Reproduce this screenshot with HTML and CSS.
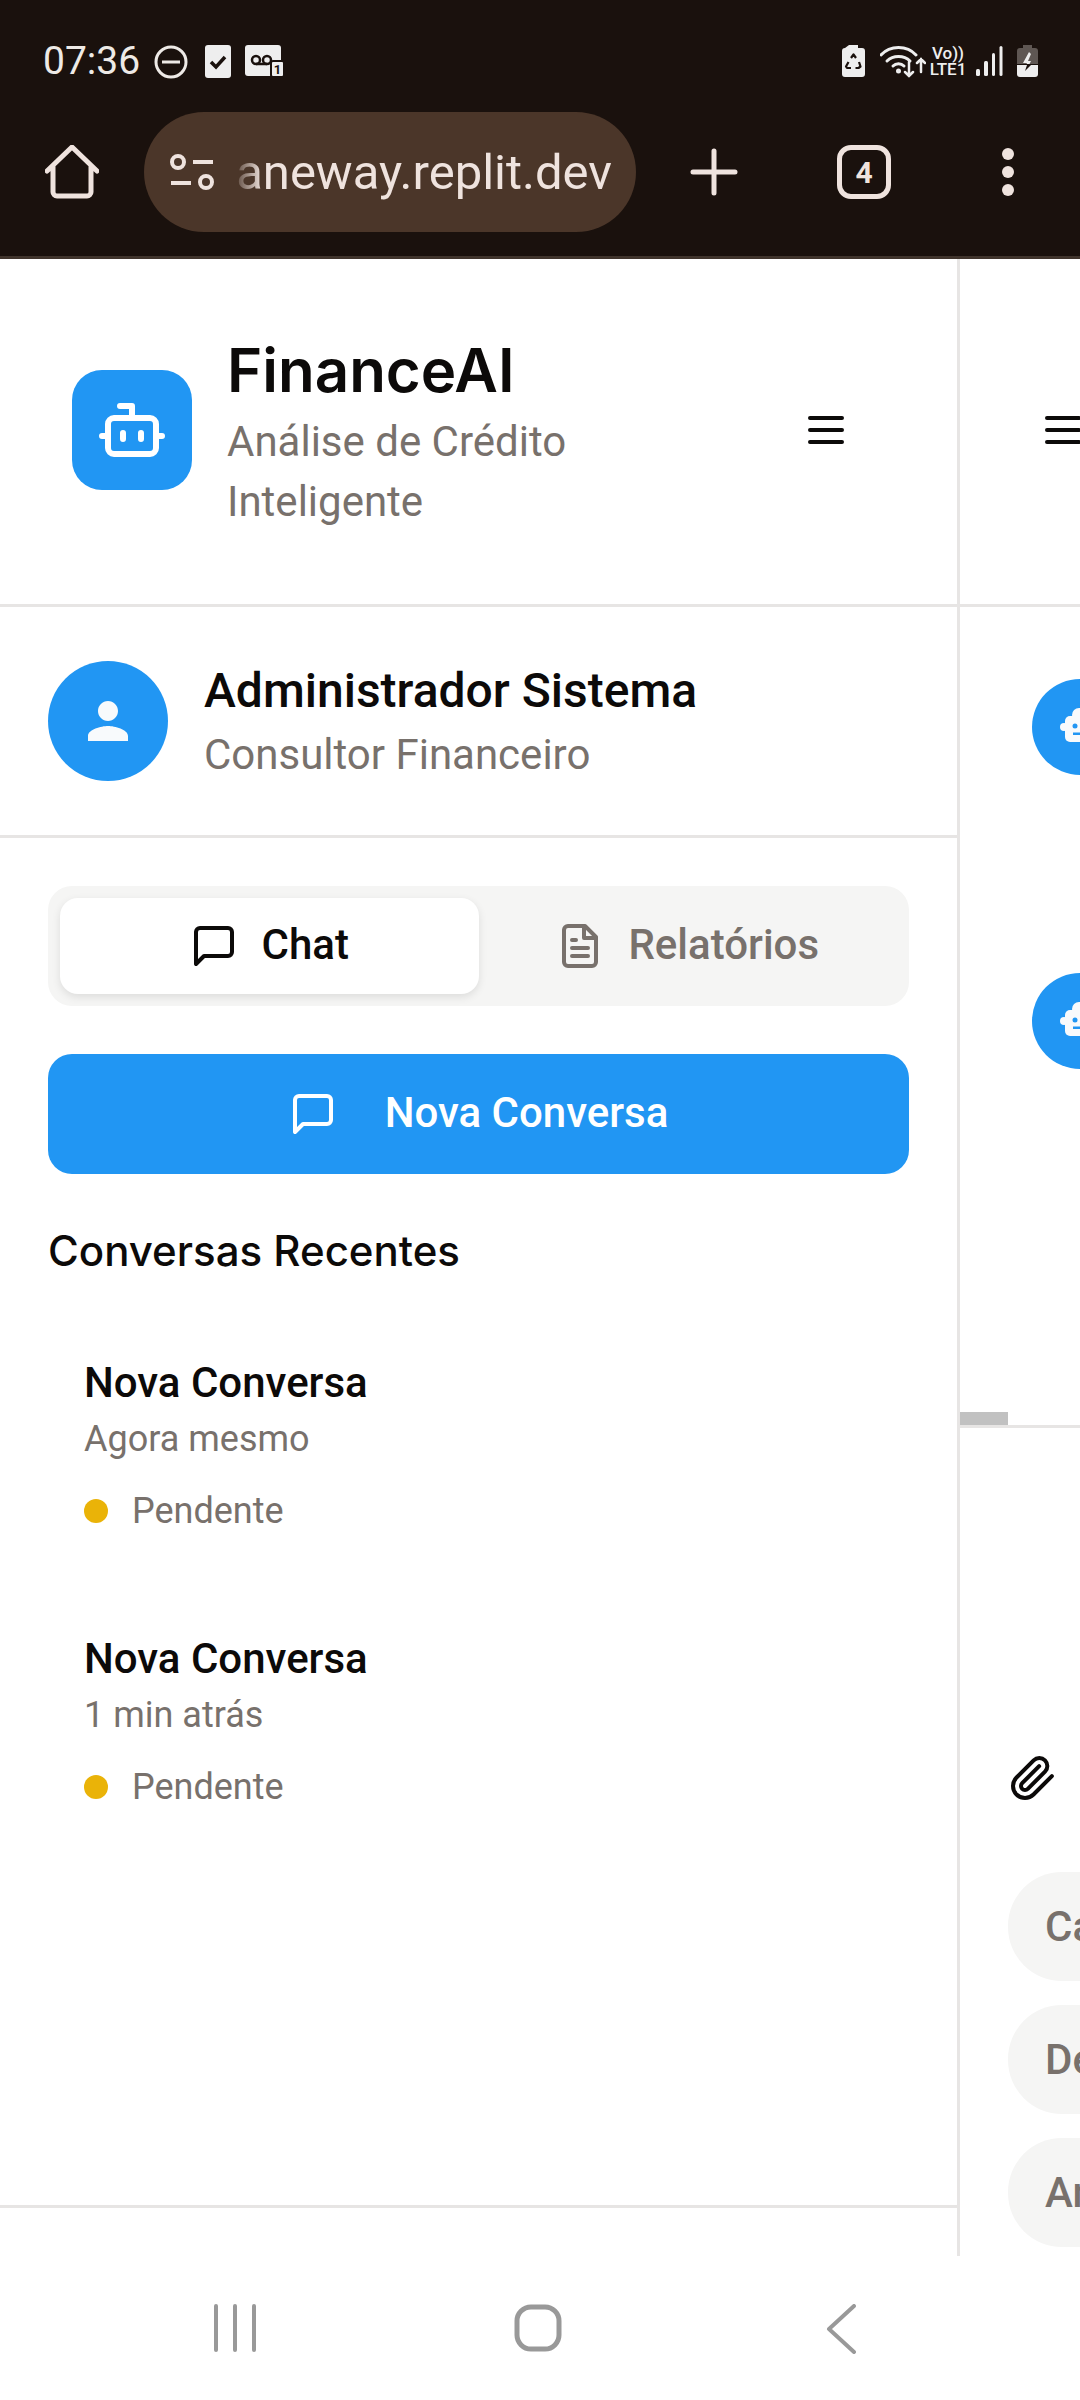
FILE: index.html
```html
<!DOCTYPE html>
<html lang="pt">
<head>
    <meta charset="UTF-8">
    <title>FinanceAI</title>
    <link rel="stylesheet" href="styles.css">
</head>
<body>
    <!-- barra do navegador -->
    <div class="topbar">
        <div class="status">
            <span class="time">07:36</span>
            <svg class="st-dnd" width="34" height="34" viewBox="0 0 34 34" fill="none" stroke="#eeeae6" stroke-width="3"><circle cx="17" cy="17" r="15"/><path d="M8 17h18"/></svg>
            <svg class="st-check" width="26" height="33" viewBox="0 0 26 33"><rect width="26" height="33" rx="3" fill="#eeeeee"/><path d="M6 17l5 5 9-10" fill="none" stroke="#1a110d" stroke-width="3.5"/></svg>
            <svg class="st-mail" width="39" height="32" viewBox="0 0 39 32"><rect width="36" height="31" rx="3" fill="#eeeeee"/><g fill="none" stroke="#1a110d" stroke-width="2.500"><circle cx="11" cy="15" r="4"/><circle cx="22" cy="15" r="4"/><path d="M11 19h11"/></g><rect x="26" y="16" width="13" height="16" rx="2" fill="#eeeeee" stroke="#1a110d" stroke-width="2"/><text x="32.500" y="29" class="st-one">1</text></svg>
            <span class="status-gap"></span>
            <svg width="23" height="32" viewBox="0 0 23 32"><path d="M7 0h9v3h4a3 3 0 0 1 3 3v23a3 3 0 0 1-3 3H3a3 3 0 0 1-3-3V6a3 3 0 0 1 3-3z" fill="#eeeeee"/><path d="M9 13l2.500-3.500L14 13M17 17l1.500 4.500-2 1.500h-3M9 23H5l-1-1.500L6.500 17" fill="none" stroke="#1a110d" stroke-width="2.200" stroke-linejoin="round"/></svg>
            <svg class="st-wifi" width="46" height="33" viewBox="0 0 46 33" fill="none" stroke="#eeeeee" stroke-width="3" stroke-linecap="round"><path d="M1 10C10 0 27 0 36 10"/><path d="M7 16c6-6 17-6 23 0"/><path d="M13 21c3-3 8-3 11 0"/><circle cx="18.500" cy="26" r="1" fill="#eeeeee"/><path d="M29 17v14M25 27l4 4 4-4M41 27V14M37 18l4-4 4 4" stroke-width="2.500"/></svg>
            <div class="st-net"><span>Vo))</span><span>LTE1</span></div>
            <svg class="st-signal" width="27" height="32" viewBox="0 0 27 32" fill="#eeeeee"><rect y="24" width="4" height="7" rx="1.500"/><rect x="8" y="16" width="4" height="15" rx="1.500"/><rect x="16" y="8" width="3" height="23" rx="1.500"/><rect x="23.500" y="1" width="3" height="30" rx="1.500"/></svg>
            <svg class="st-batt" width="21" height="32" viewBox="0 0 21 32"><path d="M6 0h9v3h3a3 3 0 0 1 3 3v13H0V6a3 3 0 0 1 3-3h3z" fill="#5f5753"/><path d="M0 20h21v9a3 3 0 0 1-3 3H3a3 3 0 0 1-3-3z" fill="#eeeeee"/><path d="M12 7L6 18h4l-.5 1h3l1.500-3h-3l3-7z" fill="#eeeeee"/><path d="M10 20l-2 6 6-6z" fill="#1a110d"/></svg>
        </div>
        <div class="toolbar">
            <svg class="tb-home" width="54" height="54" viewBox="0 0 54 54" fill="none" stroke="#efe3de" stroke-width="5" stroke-linejoin="round" stroke-linecap="round"><path d="M2 26L27 2l25 24M8 21v26a4 4 0 0 0 4 4h30a4 4 0 0 0 4-4V21"/></svg>
            <div class="url-pill">
                <svg width="44" height="36" viewBox="0 0 44 36" fill="none" stroke="#efe3de" stroke-width="4"><circle cx="8" cy="8" r="6"/><path d="M23 8h20M1 29h20"/><circle cx="36" cy="28" r="6"/></svg>
                <div class="url-text">aneway.replit.dev</div>
            </div>
            <svg class="tb-plus" width="48" height="48" viewBox="0 0 48 48" stroke="#efe3de" stroke-width="5" stroke-linecap="round"><path d="M24 3v42M3 24h42"/></svg>
            <div class="tb-tabs">4</div>
            <div class="tb-dots"><i></i><i></i><i></i></div>
        </div>
    </div>

    <div class="main">
        <!-- painel esquerdo -->
        <div class="sidebar">
            <div class="brand">
                <div class="logo">
                    <svg width="72" height="72" viewBox="0 0 24 24" fill="none" stroke="#fff" stroke-width="2" stroke-linecap="round" stroke-linejoin="round"><path d="M12 8V4H8"/><rect width="16" height="12" x="4" y="8" rx="2"/><path d="M2 14h2M20 14h2M15 13v2M9 13v2"/></svg>
                </div>
                <div class="brand-text">
                    <div class="brand-name">FinanceAI</div>
                    <div class="brand-sub">Análise de Crédito Inteligente</div>
                </div>
                <svg width="48" height="48" viewBox="0 0 24 24" fill="none" stroke="#0c0a09" stroke-width="2" stroke-linecap="round"><path d="M4 6h16M4 12h16M4 18h16"/></svg>
            </div>

            <div class="user">
                <div class="avatar">
                    <svg width="60" height="60" viewBox="0 0 24 24" fill="#f8fafc"><path d="M12 12c2.210 0 4-1.790 4-4s-1.790-4-4-4-4 1.790-4 4 1.790 4 4 4zm0 2c-2.670 0-8 1.340-8 4v2h16v-2c0-2.660-5.330-4-8-4z"/></svg>
                </div>
                <div>
                    <div class="user-name">Administrador Sistema</div>
                    <div class="user-role">Consultor Financeiro</div>
                </div>
            </div>

            <div class="content">
                <div class="tabs">
                    <div class="tab active">
                        <svg width="48" height="48" viewBox="0 0 24 24" fill="none" stroke="currentColor" stroke-width="2" stroke-linecap="round" stroke-linejoin="round"><path d="M21 15a2 2 0 0 1-2 2H7l-4 4V5a2 2 0 0 1 2-2h14a2 2 0 0 1 2 2z"/></svg>
                        <span class="label">Chat</span>
                    </div>
                    <div class="tab">
                        <svg width="48" height="48" viewBox="0 0 24 24" fill="none" stroke="currentColor" stroke-width="2" stroke-linecap="round" stroke-linejoin="round"><path d="M14.500 2H6a2 2 0 0 0-2 2v16a2 2 0 0 0 2 2h12a2 2 0 0 0 2-2V7.500z"/><path d="M14 2v6h6M16 13H8M16 17H8M10 9H8"/></svg>
                        <span class="label">Relatórios</span>
                    </div>
                </div>
                <div class="new-btn">
                    <svg width="48" height="48" viewBox="0 0 24 24" fill="none" stroke="currentColor" stroke-width="2" stroke-linecap="round" stroke-linejoin="round"><path d="M21 15a2 2 0 0 1-2 2H7l-4 4V5a2 2 0 0 1 2-2h14a2 2 0 0 1 2 2z"/></svg>
                    <span class="label">Nova Conversa</span>
                </div>
                <div class="section-title">Conversas Recentes</div>
                <div class="conv">
                    <div class="conv-title">Nova Conversa</div>
                    <div class="conv-time">Agora mesmo</div>
                    <div class="conv-status"><span class="dot"></span>Pendente</div>
                </div>
                <div class="conv">
                    <div class="conv-title">Nova Conversa</div>
                    <div class="conv-time">1 min atrás</div>
                    <div class="conv-status"><span class="dot"></span>Pendente</div>
                </div>
            </div>
        </div>

        <!-- painel do chat, cortado pela tela -->
        <div class="chat">
            <div class="chat-head">
                <svg width="48" height="48" viewBox="0 0 24 24" fill="none" stroke="#0c0a09" stroke-width="2" stroke-linecap="round"><path d="M4 6h16M4 12h16M4 18h16"/></svg>
            </div>
            <div class="messages">
                <div class="bot-avatar">
                    <svg width="48" height="48" viewBox="0 0 48 48"><g fill="#f8fafc"><circle cx="8" cy="24" r="4"/><circle cx="40" cy="24" r="4"/><rect x="16" y="5" width="16" height="14" rx="7"/><rect x="9" y="13" width="30" height="26" rx="5"/></g><g fill="#2196f3"><circle cx="19" cy="23" r="2.500"/><circle cx="29" cy="23" r="2.500"/><rect x="17" y="29.500" width="14" height="2.500"/></g></svg>
                </div>
                <div class="bot-avatar">
                    <svg width="48" height="48" viewBox="0 0 48 48"><g fill="#f8fafc"><circle cx="8" cy="24" r="4"/><circle cx="40" cy="24" r="4"/><rect x="16" y="5" width="16" height="14" rx="7"/><rect x="9" y="13" width="30" height="26" rx="5"/></g><g fill="#2196f3"><circle cx="19" cy="23" r="2.500"/><circle cx="29" cy="23" r="2.500"/><rect x="17" y="29.500" width="14" height="2.500"/></g></svg>
                </div>
            </div>
            <div class="scroll-thumb"></div>
            <div class="composer">
                <svg class="clip" width="48" height="48" viewBox="0 0 24 24" fill="none" stroke="#0c0a09" stroke-width="2" stroke-linecap="round" stroke-linejoin="round"><path d="m21.440 11.050-9.190 9.190a6 6 0 0 1-8.490-8.490l8.570-8.570A4 4 0 1 1 18 8.840l-8.590 8.570a2 2 0 0 1-2.830-2.830l8.490-8.480"/></svg>
                <div class="chip">Calcular</div>
                <div class="chip">Detalhes</div>
                <div class="chip">Analisar</div>
            </div>
        </div>
    </div>

    <!-- barra de navegação -->
    <div class="navbar">
        <svg width="44" height="48" viewBox="0 0 44 48" stroke="#999" stroke-width="4" stroke-linecap="round"><path d="M3 2v44M22 2v44M41 2v44"/></svg>
        <svg width="48" height="48" viewBox="0 0 48 48" fill="none" stroke="#999" stroke-width="5"><rect x="3" y="3" width="42" height="42" rx="14"/></svg>
        <svg width="30" height="50" viewBox="0 0 30 50" fill="none" stroke="#999" stroke-width="4" stroke-linecap="round" stroke-linejoin="round"><path d="M28 2L3 25l25 23"/></svg>
    </div>
</body>
</html>
```

FILE: styles.css
```css
* {
    box-sizing: border-box;
}
body {
    margin: 0;
    width: 1080px;
    height: 2400px;
    overflow: hidden;
    background: #ffffff;
    color: #0c0a09;
    font-family: "Roboto", "Liberation Sans", sans-serif;
}
svg {
    display: block;
    flex-shrink: 0;
}

/* barra do navegador */
.topbar {
    height: 259px;
    background: #1a110d;
    border-bottom: 3px solid #40342c;
}
.status {
    height: 112px;
    padding: 45px 42px 0 43px;
    display: flex;
    align-items: flex-start;
}
.time {
    font-size: 39px;
    line-height: 32px;
    color: #eeeae6;
}
.st-dnd {
    margin-left: 14px;
}
.st-check {
    margin-left: 17px;
}
.st-mail {
    margin-left: 14px;
}
.st-one {
    font-family: "Roboto", sans-serif;
    font-size: 13px;
    font-weight: 700;
    text-anchor: middle;
    fill: #1a110d;
}
.status-gap {
    flex: 1;
}
.st-wifi {
    margin-left: 15px;
}
.st-net {
    width: 46px;
    margin-left: -1px;
    display: flex;
    flex-direction: column;
    align-items: center;
    color: #eeeeee;
    font-size: 17px;
    line-height: 16px;
    font-weight: 500;
}
.st-signal {
    margin-left: 5px;
}
.st-batt {
    margin-left: 14px;
}
.toolbar {
    height: 120px;
    padding-left: 45px;
    display: flex;
    align-items: center;
}
.url-pill {
    width: 492px;
    height: 120px;
    margin-left: 45px;
    padding: 0 24px 0 26px;
    background: #4b3629;
    border-radius: 60px;
    display: flex;
    align-items: center;
}
.url-text {
    flex: 1;
    text-align: right;
    white-space: nowrap;
    color: #efe3de;
    font-size: 49px;
    -webkit-mask-image: linear-gradient(to right, transparent 18px, #000 48px);
    mask-image: linear-gradient(to right, transparent 18px, #000 48px);
}
.tb-plus {
    margin-left: 54px;
}
.tb-tabs {
    width: 54px;
    height: 54px;
    margin-left: 99px;
    border: 5px solid #efe3de;
    border-radius: 14px;
    display: flex;
    align-items: center;
    justify-content: center;
    color: #efe3de;
    font-size: 30px;
    font-weight: 700;
}
.tb-dots {
    margin-left: 111px;
    display: flex;
    flex-direction: column;
    gap: 6px;
}
.tb-dots i {
    width: 12px;
    height: 12px;
    border-radius: 50%;
    background: #efe3de;
}

/* layout principal */
.main {
    height: 1997px;
    display: flex;
}
.sidebar {
    width: 960px;
    flex-shrink: 0;
    border-right: 3px solid #e7e5e4;
    display: flex;
    flex-direction: column;
}
.brand {
    height: 348px;
    padding: 0 0 3px 72px;
    border-bottom: 3px solid #e7e5e4;
    display: flex;
    align-items: center;
    flex-shrink: 0;
}
.logo {
    width: 120px;
    height: 120px;
    border-radius: 30px;
    background: #2196f3;
    display: flex;
    align-items: center;
    justify-content: center;
    flex-shrink: 0;
}
.brand-text {
    width: 575px;
    margin-left: 35px;
}
.brand-name {
    font-family: "Inter", "Liberation Sans", sans-serif;
    font-size: 60px;
    line-height: 84px;
    font-weight: 600;
}
.brand-sub {
    font-size: 42px;
    line-height: 60px;
    color: #78716c;
    width: 420px;
}
.user {
    height: 231px;
    padding: 0 48px;
    border-bottom: 3px solid #e7e5e4;
    display: flex;
    align-items: center;
    gap: 36px;
    flex-shrink: 0;
}
.avatar {
    width: 120px;
    height: 120px;
    border-radius: 50%;
    background: #2196f3;
    display: flex;
    align-items: center;
    justify-content: center;
    flex-shrink: 0;
}
.user-name {
    font-size: 48px;
    line-height: 72px;
    font-weight: 500;
}
.user-role {
    margin: -2px 0 2px;
    font-size: 42px;
    line-height: 60px;
    color: #78716c;
}
.content {
    flex: 1;
    padding: 48px 48px 0;
    margin-bottom: 48px;
    border-bottom: 3px solid #e7e5e4;
}
.tabs {
    height: 120px;
    padding: 12px;
    background: #f5f5f4;
    border-radius: 24px;
    display: flex;
}
.tab {
    flex: 1;
    display: flex;
    align-items: center;
    justify-content: center;
    gap: 24px;
    font-size: 42px;
    font-weight: 500;
    color: #78716c;
    border-radius: 18px;
}
.tab.active {
    background: #ffffff;
    color: #0c0a09;
    box-shadow: 0 3px 9px rgba(0,0,0,.1);
}
.label {
    margin-bottom: 3px;
}
.new-btn {
    height: 120px;
    margin-top: 48px;
    background: #2196f3;
    color: #ffffff;
    border-radius: 24px;
    display: flex;
    align-items: center;
    justify-content: center;
    gap: 48px;
    font-size: 42px;
    font-weight: 500;
}
.section-title {
    margin: 47px 0 24px;
    font-family: "Inter", "Liberation Sans", sans-serif;
    font-size: 42px;
    line-height: 60px;
    font-weight: 500;
}
.conv {
    padding: 48px 36px 0;
    margin-bottom: 46px;
}
.conv-title {
    margin-bottom: 2px;
    font-size: 42px;
    line-height: 60px;
    font-weight: 500;
}
.conv-time {
    font-size: 36px;
    line-height: 48px;
    color: #78716c;
}
.conv-status {
    margin-top: 24px;
    display: flex;
    align-items: center;
    gap: 24px;
    font-size: 36px;
    line-height: 48px;
    color: #78716c;
}
.dot {
    width: 24px;
    height: 24px;
    border-radius: 50%;
    background: #eab308;
}

/* painel do chat */
.chat {
    width: 120px;
    flex-shrink: 0;
    overflow: hidden;
    display: flex;
    flex-direction: column;
}
.chat-head {
    height: 348px;
    width: 300px;
    padding: 147px 0 0 79px;
    border-bottom: 3px solid #e7e5e4;
    flex-shrink: 0;
}
.messages {
    height: 805px;
    padding: 72px 0 0 72px;
    flex-shrink: 0;
}
.bot-avatar {
    width: 96px;
    height: 96px;
    margin-bottom: 198px;
    border-radius: 50%;
    background: #2196f3;
    display: flex;
    align-items: center;
    justify-content: center;
}
.scroll-thumb {
    width: 48px;
    height: 13px;
    background: #c1c1c1;
    flex-shrink: 0;
}
.composer {
    width: 500px;
    flex: 1;
    border-top: 3px solid #e7e5e4;
    padding: 326px 0 0 48px;
}
.clip {
    margin-left: 1px;
    margin-bottom: 70px;
}
.chip {
    height: 109px;
    margin-bottom: 24px;
    padding-left: 37px;
    background: #f5f5f4;
    border-radius: 54px;
    display: flex;
    align-items: center;
    color: #78716c;
    font-size: 42px;
    font-weight: 500;
}

/* barra de navegação */
.navbar {
    height: 144px;
    padding: 48px 0 0 83px;
    display: grid;
    grid-template-columns: repeat(3, 303px);
    justify-items: center;
    align-items: start;
}
```
